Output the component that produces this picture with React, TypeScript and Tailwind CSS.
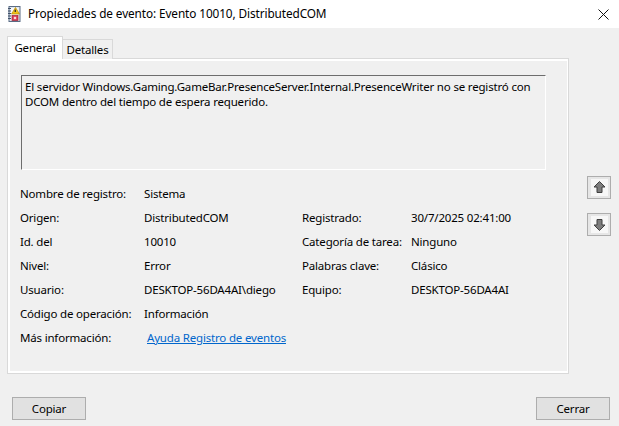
import { ReactNode } from "react";

type Field = { label: string; value: ReactNode };

const leftFields: Field[] = [
  { label: "Nombre de registro:", value: "Sistema" },
  { label: "Origen:", value: "DistributedCOM" },
  { label: "Id. del", value: "10010" },
  { label: "Nivel:", value: "Error" },
  { label: "Usuario:", value: "DESKTOP-56DA4AI\\diego" },
  { label: "Código de operación:", value: "Información" },
];

const rightFields: (Field | null)[] = [
  null,
  { label: "Registrado:", value: "30/7/2025 02:41:00" },
  { label: "Categoría de tarea:", value: "Ninguno" },
  { label: "Palabras clave:", value: "Clásico" },
  { label: "Equipo:", value: "DESKTOP-56DA4AI" },
  null,
];

function EventIcon() {
  return (
    <svg width="14" height="16" viewBox="0 0 14 16">
      <rect x="2" y="0.5" width="11" height="15" fill="#dfe6ee" stroke="#5b6d86" />
      <rect x="3.5" y="2" width="8" height="12" fill="#f7f9fb" />
      <path d="M1 2.5h3M1 5h3M1 7.5h3M1 10h3M1 12.5h3" stroke="#3e4f68" strokeWidth="1" />
      <path d="M8.5 1.5 L12.5 8 L4.5 8 Z" fill="#f2c21b" stroke="#b88a00" strokeWidth="0.7" />
      <rect x="7.6" y="3.6" width="1.4" height="2.4" fill="#333" />
      <rect x="5" y="9.5" width="6" height="5" fill="#d9405a" stroke="#9c1f34" strokeWidth="0.7" />
      <circle cx="8" cy="12" r="1.3" fill="#fbdada" />
    </svg>
  );
}

function ArrowButton({ down }: { down?: boolean }) {
  return (
    <button
      type="button"
      className="flex h-[23px] w-[24px] items-center justify-center border border-[#adadad] bg-[#e6e6e6]"
    >
      <svg width="17" height="17" viewBox="0 0 17 17" className={down ? "rotate-180" : ""}>
        <rect x="0" y="0" width="17" height="17" fill="#f7f7f7" />
        <path d="M8.5 2.5 L14 8 L11 8 L11 13.5 L6 13.5 L6 8 L3 8 Z" fill="#7d7d7d" stroke="#3f3f3f" strokeWidth="1" strokeLinejoin="round" />
      </svg>
    </button>
  );
}

function DialogButton({ children }: { children: ReactNode }) {
  return (
    <button
      type="button"
      className="flex h-[23px] w-[74px] items-center justify-center border border-[#adadad] bg-[#e1e1e1] text-black"
    >
      {children}
    </button>
  );
}

export default function App() {
  return (
    <div className="h-[426px] w-[619px] overflow-hidden bg-[#f0f0f0] font-['Segoe_UI','Noto_Sans',sans-serif] text-[11.5px] tracking-[-0.18px] text-black">
      {/* title bar */}
      <div className="flex h-[28px] items-center bg-white">
        <div className="ml-[7px] flex h-[16px] w-[14px] items-center">
          <EventIcon />
        </div>
        <span className="ml-[7px] whitespace-nowrap text-[11.8px] tracking-[-0.1px]">
          Propiedades de evento: Evento 10010, DistributedCOM
        </span>
        <div className="ml-auto mr-[6px] flex h-[28px] w-[20px] items-center justify-center">
          <svg width="11" height="11" viewBox="0 0 11 11">
            <path d="M0.5 0.5 L10.5 10.5 M10.5 0.5 L0.5 10.5" stroke="#111" strokeWidth="1" />
          </svg>
        </div>
      </div>

      <div className="flex pt-[8px]">
        {/* tabs + panel */}
        <div className="ml-[7px] flex w-[562px] flex-col">
          <div className="relative z-10 -mb-px flex h-[23px] items-end">
            <div className="flex h-[23px] w-[56px] items-center justify-center border border-b-0 border-[#d9d9d9] bg-white">
              General
            </div>
            <div className="flex h-[20px] w-[50px] items-center justify-center border border-b-0 border-l-0 border-[#d9d9d9] bg-[#f0f0f0]">
              Detalles
            </div>
          </div>
          <div className="h-[316px] border border-[#d9d9d9] bg-white pb-[2px] pl-[2px] pr-[1px] pt-[2px]">
            <div className="flex h-full flex-col bg-[#f0f0f0] pl-[11px] pt-[14px]">
              <div className="h-[95px] w-[525px] border border-b-white border-l-[#6d6d6d] border-r-white border-t-[#6d6d6d] pl-[3px] pt-[3px] leading-[15px]">
                <div className="whitespace-nowrap">
                  El servidor Windows.Gaming.GameBar.PresenceServer.Internal.PresenceWriter no se registró con
                </div>
                <div className="whitespace-nowrap">DCOM dentro del tiempo de espera requerido.</div>
              </div>

              <div className="mt-[12px] grid grid-cols-[124px_158px_109px_1fr] leading-[24px]">
                {leftFields.map((f, i) => {
                  const r = rightFields[i];
                  return [
                    <div key={`l${i}`} className="-ml-[1px] whitespace-nowrap">{f.label}</div>,
                    <div key={`v${i}`} className="-ml-[1px] whitespace-nowrap">{f.value}</div>,
                    <div key={`rl${i}`} className="-ml-[1px] whitespace-nowrap">{r ? r.label : ""}</div>,
                    <div key={`rv${i}`} className="-ml-[1px] whitespace-nowrap">{r ? r.value : ""}</div>,
                  ];
                })}
                <div className="-ml-[1px] whitespace-nowrap">Más información:</div>
                <div className="col-span-3 ml-[2px] whitespace-nowrap">
                  <span className="text-[#0066cc] underline">Ayuda Registro de eventos</span>
                </div>
              </div>
            </div>
          </div>
        </div>

        {/* navigation arrows */}
        <div className="ml-[18px] mt-[140px] flex flex-col gap-[14px]">
          <ArrowButton />
          <ArrowButton down />
        </div>
      </div>

      <div className="mt-[23px] flex justify-between pl-[12px] pr-[9px]">
        <DialogButton>Copiar</DialogButton>
        <DialogButton>Cerrar</DialogButton>
      </div>
    </div>
  );
}
